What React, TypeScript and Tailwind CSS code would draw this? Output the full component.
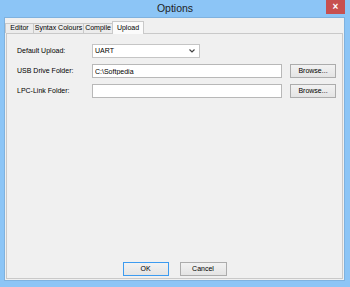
import React, { useState } from 'react';

const tabs = [
  { name: 'Editor', w: 'w-[29px]' },
  { name: 'Syntax Colours', w: 'w-[51px]' },
  { name: 'Compile', w: 'w-[30px]' },
  { name: 'Upload', w: 'w-[32px]' },
];

export default function App() {
  const [activeTab, setActiveTab] = useState('Upload');
  const [usbFolder, setUsbFolder] = useState('C:\\Softpedia');
  const [lpcFolder, setLpcFolder] = useState('');

  return (
    <div className="w-[350px] h-[287px] bg-[#8cc5f6] flex flex-col font-['Liberation_Sans',Arial,sans-serif] text-[7px] text-black">
      {/* Title bar */}
      <div className="relative h-[17px] flex items-center justify-center shrink-0">
        <span className="text-[10.5px] text-[#1e1e1e] pt-[1px]">Options</span>
        <button className="absolute right-[5px] top-0 w-[19px] h-[14px] bg-[#c75050] flex items-center justify-center text-white text-[10px] font-bold leading-none">
          ×
        </button>
      </div>

      {/* Client area */}
      <div className="flex-1 ml-[4px] mb-[6px] mr-[5px] bg-[#f0f0f0] border border-[#7fb2df] flex flex-col pb-[1px]">
        {/* Tab strip */}
        <div className="flex items-end h-[15px] shrink-0 whitespace-nowrap">
          {tabs.map((tab) =>
            tab.name === activeTab ? (
              <div
                key={tab.name}
                className={`${tab.w} h-[13px] -mb-[1px] bg-[#fbfbfb] border border-b-0 border-[#c9c9c9] flex items-center justify-center relative z-10`}
              >
                {tab.name}
              </div>
            ) : (
              <button
                key={tab.name}
                onClick={() => setActiveTab(tab.name)}
                className={`${tab.w} h-[10px] bg-[#ececec] border border-b-0 border-[#c9c9c9] -mr-[1px] flex items-center justify-center`}
              >
                {tab.name}
              </button>
            )
          )}
        </div>

        {/* Tab panel */}
        <div className="flex-1 mx-[1px] border border-[#c9c9c9] bg-[#f0f0f0] flex flex-col pt-[10px] pl-[10px] pb-[2px]">
          <div className="flex flex-col gap-[6px]">
            <div className="flex items-center h-[14px]">
              <span className="w-[75px]">Default Upload:</span>
              <div className="w-[108px] h-[14px] bg-white border border-[#c5c5c5] flex items-center justify-between pl-[2px] pr-[4px]">
                <span>UART</span>
                <svg width="6" height="4" viewBox="0 0 6 4">
                  <path d="M0.5 0.5 L3 3 L5.5 0.5" fill="none" stroke="#444" strokeWidth="1.2" />
                </svg>
              </div>
            </div>
            <div className="flex items-center h-[14px]">
              <span className="w-[75px]">USB Drive Folder:</span>
              <input
                value={usbFolder}
                onChange={(e) => setUsbFolder(e.target.value)}
                className="w-[190px] h-[14px] bg-white border border-[#b8b8b8] px-[2px] outline-none"
              />
              <button className="ml-[8px] w-[46px] h-[14px] border border-[#acacac] bg-gradient-to-b from-[#f2f2f2] to-[#e4e4e4]">
                Browse...
              </button>
            </div>
            <div className="flex items-center h-[14px]">
              <span className="w-[75px]">LPC-Link Folder:</span>
              <input
                value={lpcFolder}
                onChange={(e) => setLpcFolder(e.target.value)}
                className="w-[190px] h-[14px] bg-white border border-[#b8b8b8] px-[2px] outline-none"
              />
              <button className="ml-[8px] w-[46px] h-[14px] border border-[#acacac] bg-gradient-to-b from-[#f2f2f2] to-[#e4e4e4]">
                Browse...
              </button>
            </div>
          </div>

          <div className="flex-1" />

          {/* OK / Cancel */}
          <div className="flex justify-center gap-[11px] pr-[10px]">
            <button className="w-[46px] h-[14px] border border-[#3c9bf0] bg-gradient-to-b from-[#f2f2f2] to-[#e4e4e4]">
              OK
            </button>
            <button className="w-[47px] h-[14px] border border-[#acacac] bg-gradient-to-b from-[#f2f2f2] to-[#e4e4e4]">
              Cancel
            </button>
          </div>
        </div>
      </div>
    </div>
  );
}
